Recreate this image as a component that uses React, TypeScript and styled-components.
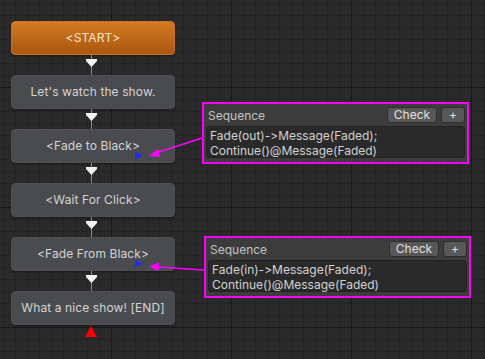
import styled, { createGlobalStyle } from 'styled-components';

const GlobalStyle = createGlobalStyle`
  html, body {
    margin: 0;
    padding: 0;
    background: #282828;
  }
  body {
    font-family: Inter, 'Noto Sans', sans-serif;
    font-variant-ligatures: none;
    font-feature-settings: 'calt' 0, 'liga' 0;
  }
`;

// Canvas with the editor grid
const Canvas = styled.div`
  position: relative;
  width: 485px;
  height: 359px;
  overflow: hidden;
  background-color: #2a2a2a;
  background-image:
    linear-gradient(to right, #191919 1px, transparent 1px),
    linear-gradient(to bottom, #191919 1px, transparent 1px),
    linear-gradient(to right, #232323 1px, transparent 1px),
    linear-gradient(to bottom, #232323 1px, transparent 1px);
  background-size: 120px 120px, 120px 120px, 12px 12px, 12px 12px;
  background-position: 111px 87px, 111px 87px, 3px 3px, 3px 3px;
`;

// Flow column of nodes
const Column = styled.div`
  display: flex;
  flex-direction: column;
  width: 164px;
  padding: 21px 0 0 11px;
`;

const Node = styled.div<{ $start?: boolean }>`
  position: relative;
  height: 34px;
  box-sizing: border-box;
  display: flex;
  align-items: center;
  justify-content: center;
  padding-bottom: 1px;
  border-radius: 4px;
  border: 1px solid ${(p) => (p.$start ? '#c9732a' : '#505155')};
  background: ${(p) =>
    p.$start ? 'linear-gradient(to bottom, #d27b22, #a9560f)' : '#4a4b4f'};
  box-shadow: 0 1px 2px rgba(0, 0, 0, 0.45);
  color: ${(p) => (p.$start ? '#f4e2cf' : '#d4d4d4')};
  font-size: 12px;
  letter-spacing: 0.1px;
`;

const Connector = styled.div`
  position: relative;
  height: 20px;
  display: flex;
  justify-content: center;
  margin-left: -4px;

  &::before {
    content: '';
    position: absolute;
    top: 0;
    bottom: 0;
    left: 50%;
    width: 1px;
    background: #8a8a8a;
  }

  svg {
    position: relative;
    margin-top: 4px;
  }
`;

const EndMark = styled.div`
  display: flex;
  justify-content: center;
  margin: 1px 0 0 -4px;
`;

const Flag = styled.svg`
  position: absolute;
  right: 31px;
  bottom: 3px;
`;

// Sequence panels
const Panel = styled.div<{ $x: number; $y: number }>`
  position: absolute;
  left: ${(p) => p.$x}px;
  top: ${(p) => p.$y}px;
  width: 267px;
  box-sizing: border-box;
  border: 2px solid #ff00ff;
  background: #3c3c3c;
  padding: 3px 2px 4px 2px;
`;

const PanelHeader = styled.div`
  display: flex;
  align-items: center;
  height: 16px;
  gap: 4px;
  margin-bottom: 3px;
`;

const PanelTitle = styled.span`
  flex: 1;
  padding-left: 2px;
  color: #c2c2c2;
  font-size: 12px;
`;

const HeaderButton = styled.button<{ $w: number }>`
  width: ${(p) => p.$w}px;
  height: 16px;
  padding: 0;
  border: 1px solid #2c2c2c;
  border-radius: 3px;
  background: #585858;
  color: #e2e2e2;
  font-family: inherit;
  font-size: 12px;
  line-height: 14px;
`;

const Code = styled.div`
  height: 32px;
  box-sizing: border-box;
  padding: 1px 3px;
  border: 1px solid #212121;
  border-radius: 3px;
  background: #2a2a2a;
  color: #d2d2d2;
  font-size: 12px;
  line-height: 15px;
`;

const Arrows = styled.svg`
  position: absolute;
  left: 0;
  top: 0;
  pointer-events: none;
`;

const DownArrow = () => (
  <svg width="11" height="8" viewBox="0 0 11 8">
    <polygon points="0,0 11,0 11,2 5.5,8 0,2" fill="#f2f2f2" />
  </svg>
);

const NodeFlag = () => (
  <Flag width="8" height="7" viewBox="0 0 8 7">
    <polygon points="0,0 2,0 2,1 8,3.5 2,6 2,7 0,7" fill="#1c2cff" />
  </Flag>
);

const nodes = [
  { label: '<START>', start: true },
  { label: "Let's watch the show." },
  { label: '<Fade to Black>', flag: true },
  { label: '<Wait For Click>' },
  { label: '<Fade From Black>', flag: true },
  { label: 'What a nice show! [END]' },
];

const panels = [
  { x: 202, y: 102, lines: ['Fade(out)->Message(Faded);', 'Continue()@Message(Faded)'] },
  { x: 204, y: 236, lines: ['Fade(in)->Message(Faded);', 'Continue()@Message(Faded)'] },
];

export default function App() {
  return (
    <>
      <GlobalStyle />
      <Canvas>
        <Column>
          {nodes.map((n, i) => (
            <div key={n.label}>
              <Node $start={n.start}>
                {n.label}
                {n.flag && <NodeFlag />}
              </Node>
              {i < nodes.length - 1 && (
                <Connector>
                  <DownArrow />
                </Connector>
              )}
            </div>
          ))}
          <EndMark>
            <svg width="12" height="11" viewBox="0 0 12 11">
              <polygon points="6,0 12,11 0,11" fill="#ff0000" />
            </svg>
          </EndMark>
        </Column>

        {panels.map((p) => (
          <Panel key={p.y} $x={p.x} $y={p.y}>
            <PanelHeader>
              <PanelTitle>Sequence</PanelTitle>
              <HeaderButton $w={50}>Check</HeaderButton>
              <HeaderButton $w={24}>+</HeaderButton>
            </PanelHeader>
            <Code>
              {p.lines.map((l) => (
                <div key={l}>{l}</div>
              ))}
            </Code>
          </Panel>
        ))}

        <Arrows width="485" height="359">
          <line x1="202" y1="138" x2="156" y2="153" stroke="#ff00ff" strokeWidth="1.6" />
          <polygon points="149,156 158,149 160,157" fill="#ff00ff" />
          <line x1="204" y1="270" x2="157" y2="267" stroke="#ff00ff" strokeWidth="1.6" />
          <polygon points="149,266.5 159,262.5 158.5,271" fill="#ff00ff" />
        </Arrows>
      </Canvas>
    </>
  );
}
